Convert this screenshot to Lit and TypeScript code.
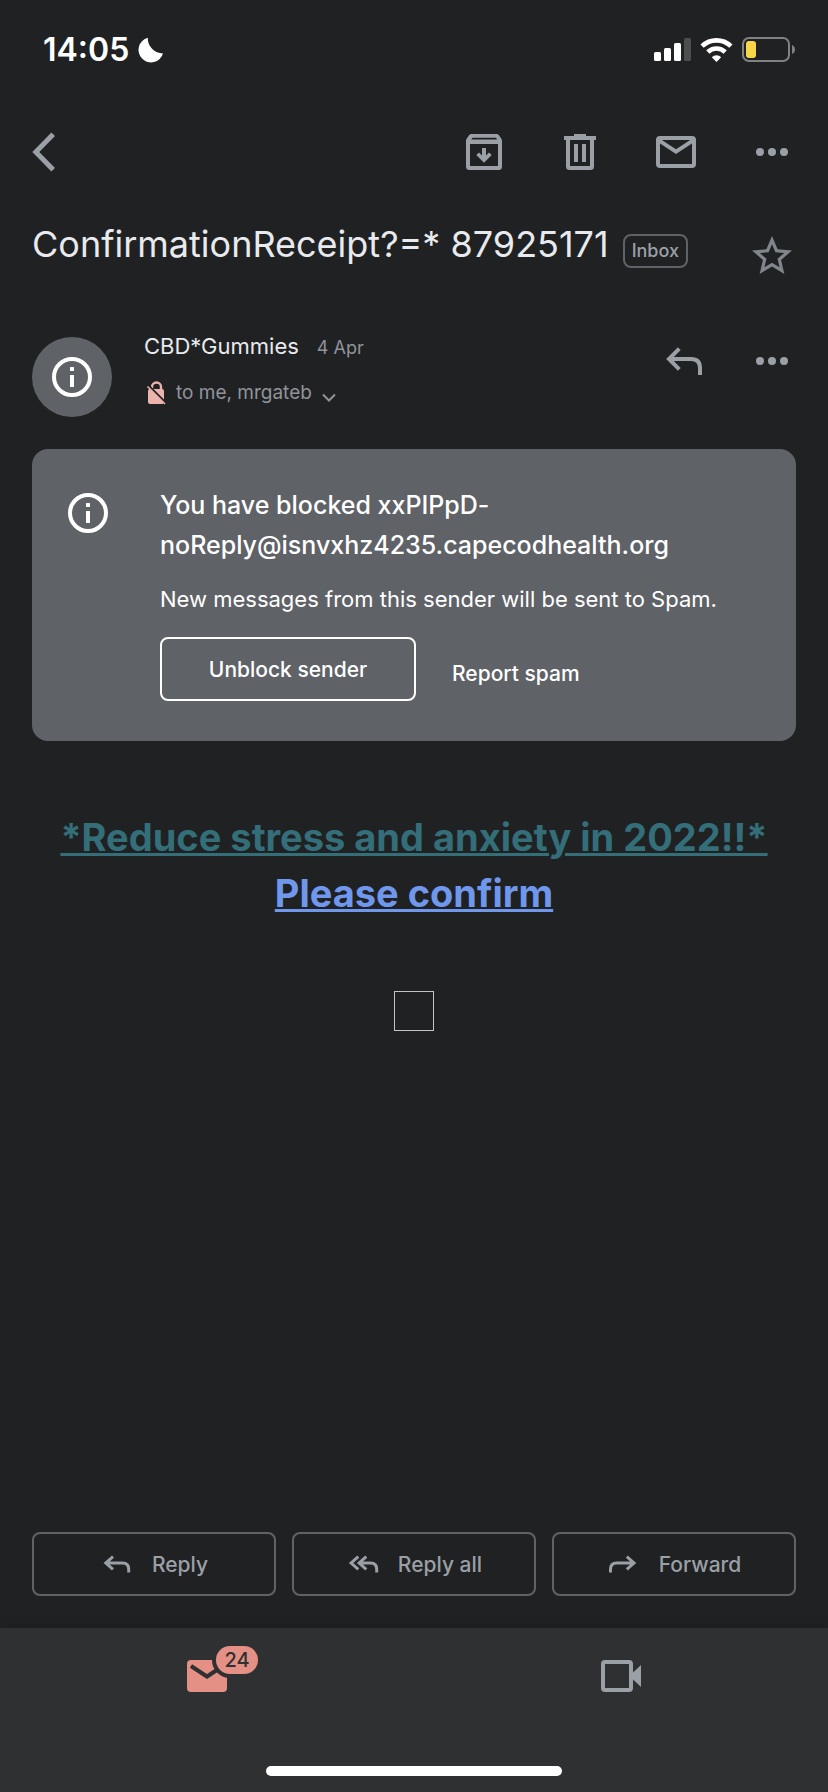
import { LitElement, html, css, svg } from "lit";
import { customElement, property } from "lit/decorators.js";

const shapes = {
  back: svg`<path d="M33.2 6.300 15.800 24l17.400 17.700" fill="none" stroke="currentColor" stroke-width="5"/>`,
  archive: svg`<path fill="currentColor" fill-rule="evenodd" d="M11.5 6h25a3 3 0 0 1 2.3 1.1L41.2 10.5a3.5 3.5 0 0 1 .8 2.2V38.5a3.5 3.5 0 0 1-3.5 3.5h-29A3.5 3.5 0 0 1 6 38.5V12.7a3.5 3.5 0 0 1 .8-2.2L9.2 7.1A3 3 0 0 1 11.5 6zM11.3 11.5h25.900L36 9.700H12.500zM10 16v22h28V16z"/><path fill="currentColor" d="M22 20h4v7.500l3-3 2.700 2.500-7.700 7.700-7.700-7.700 2.700-2.500 3 3z"/>`,
  trash: svg`<path fill="currentColor" fill-rule="evenodd" d="M18 6h12v2h10v4h-2v26.500a3.500 3.500 0 0 1-3.500 3.500h-21a3.500 3.500 0 0 1-3.500-3.500V12H8V8h10zM14 12v26h20V12zM18 16h4v18h-4zM26 16h4v18h-4z"/>`,
  mail: svg`<rect x="6" y="10" width="36" height="28" rx="2" fill="none" stroke="currentColor" stroke-width="4"/><path d="M6.500 12.200 24 23.700l17.500-11.500" fill="none" stroke="currentColor" stroke-width="4"/>`,
  more: svg`<g fill="currentColor"><circle cx="12" cy="24" r="4"/><circle cx="24" cy="24" r="4"/><circle cx="36" cy="24" r="4"/></g>`,
  star: svg`<path transform="scale(2)" fill="currentColor" d="M22 9.240l-7.190-.62L12 2 9.190 8.630 2 9.240l5.460 4.730L5.820 21 12 17.270 18.180 21l-1.630-7.030L22 9.240zM12 15.400l-3.760 2.270 1-4.280-3.320-2.880 4.380-.38L12 6.100l1.710 4.040 4.380.38-3.320 2.880 1 4.280L12 15.400z"/>`,
  info: svg`<circle cx="24" cy="24" r="18" fill="none" stroke="currentColor" stroke-width="4"/><path fill="currentColor" d="M22 14h4v4h-4zM22 22h4v12h-4z"/>`,
  reply: svg`<path d="M19.300 11.700 9 22l10.300 10.300M9 22h22q9 0 9 9v7" fill="none" stroke="currentColor" stroke-width="4"/>`,
  video: svg`<rect x="6" y="10" width="28" height="28" rx="2" fill="none" stroke="currentColor" stroke-width="4"/><path fill="currentColor" d="M35 21.500 44 13v22l-9-8.500z"/>`,
  mailFilled: svg`<path fill="currentColor" d="M8 8h32a4 4 0 0 1 4 4v24a4 4 0 0 1-4 4H8a4 4 0 0 1-4-4V12a4 4 0 0 1 4-4z"/><path d="M8 14l16 10.500L40 14" fill="none" stroke="#2f3032" stroke-width="4"/>`,
};
type ShapeName = keyof typeof shapes;

@customElement("mail-icon")
export class MailIcon extends LitElement {
  @property() name: ShapeName = "more";
  static styles = css`
    :host { display: block; width: 48px; height: 48px; flex: none; }
    svg { display: block; }
  `;
  render() {
    return html`<svg width="48" height="48" viewBox="0 0 48 48" aria-hidden="true">${shapes[this.name]}</svg>`;
  }
}

const smallArrows = {
  reply: svg`<path d="M13 8.600 5.800 15l7.200 6.400M5.800 15h16.700q6.200 0 6.200 6.200v3.200"/>`,
  replyAll: svg`<path d="M12.300 8.600 5.100 15l7.200 6.400M20.300 8.600 13.100 15l7.200 6.400M13.100 15h11.400q6.200 0 6.200 6.200v3.200"/>`,
  forward: svg`<path d="M19.800 8.600 27 15l-7.200 6.400M27 15H9.700q-6.200 0-6.200 6.200v3.200"/>`,
};

const actions: { label: string; arrow: keyof typeof smallArrows }[] = [
  { label: "Reply", arrow: "reply" },
  { label: "Reply all", arrow: "replyAll" },
  { label: "Forward", arrow: "forward" },
];

@customElement("status-bar")
export class StatusBar extends LitElement {
  static styles = css`
    :host { display: flex; align-items: center; justify-content: space-between; height: 100px; padding: 0 32px 0 43px; color: #fff; }
    div { display: flex; align-items: center; gap: 9px; }
    .time { font-size: 32px; line-height: 40px; font-weight: 600; }
    svg { display: block; overflow: visible; }
  `;
  render() {
    return html`
      <div>
        <span class="time">14:05</span>
        <svg width="26" height="26" viewBox="0 0 26 26" aria-label="Do not disturb"><path fill="currentColor" d="M9.800.8A15 15 0 0 0 25 16.400 12.500 12.500 0 1 1 9.800.8z"/></svg>
      </div>
      <div>
        <svg width="37" height="24" viewBox="0 0 37 24" aria-label="Signal"><g fill="currentColor"><rect y="14" width="7" height="9" rx="1.500"/><rect x="10" y="10" width="7" height="13" rx="1.500"/><rect x="20" y="5" width="7" height="18" rx="1.500"/><rect x="30" width="7" height="23" rx="1.500" fill="#4d4e50"/></g></svg>
        <svg width="33" height="24" viewBox="0 0 33 24" aria-label="Wi-Fi"><g fill="none" stroke="currentColor" stroke-width="4.600"><path d="M2.100 8.200a20.800 20.800 0 0 1 28.800 0"/><path d="M7.800 14a12.400 12.400 0 0 1 17.400 0"/></g><path fill="currentColor" d="M16.500 24l-4.700-4.700a6.600 6.600 0 0 1 9.400 0z"/></svg>
        <svg width="54" height="26" viewBox="0 0 54 26" aria-label="Battery low"><rect x="1" y="1" width="46" height="23" rx="6" fill="none" stroke="#808183" stroke-width="2"/><rect x="4" y="4" width="10" height="17" rx="3" fill="#f8d648"/><path fill="#808183" d="M50 8q3 1.500 3 4.500t-3 4.500z"/></svg>
      </div>
    `;
  }
}

@customElement("app-root")
export class AppRoot extends LitElement {
  static styles = css`
    :host {
      display: flex; flex-direction: column; min-height: 100vh; box-sizing: border-box;
      background: #202123; color: #e8eaed; font-family: Inter, "Liberation Sans", sans-serif;
    }
    * { box-sizing: border-box; }
    h1, h2, p { margin: 0; font-weight: 400; }
    button { background: none; border: 0; padding: 0; margin: 0; color: inherit; font: inherit; cursor: pointer; }
    svg { display: block; flex: none; }
    .grow { flex: 1; }

    .toolbar { display: flex; align-items: center; height: 104px; padding: 0 32px 0 20px; color: #9aa0a6; }
    .tools { display: flex; gap: 48px; margin-left: auto; }

    .subject { display: flex; align-items: flex-start; justify-content: space-between; gap: 16px; padding: 18px 32px 0; }
    .subject button { padding-top: 10px; color: #80868b; }
    .heading { display: flex; flex-wrap: wrap; align-items: baseline; gap: 14px; }
    h1 { font-size: 36px; line-height: 44px; }
    .label { border: 2px solid #5f6368; border-radius: 8px; padding: 0 7px; font-size: 18px; line-height: 30px; font-weight: 500; color: #9aa0a6; }

    .sender { display: flex; align-items: flex-start; padding: 57px 32px 32px; }
    .avatar { display: grid; place-items: center; width: 80px; height: 80px; border-radius: 50%; background: #5f6368; color: #fff; margin-right: 32px; flex: none; }
    .who { display: flex; flex-direction: column; gap: 24px; }
    .line { display: flex; align-items: center; line-height: 18px; font-size: 18px; color: #8f949a; }
    .line.top { align-items: baseline; gap: 18px; }
    .name { font-size: 22px; color: #e8eaed; }
    .recipients { display: flex; align-items: center; gap: 10px; line-height: 18px; font-size: 19px; }
    .message-tools { display: flex; gap: 40px; margin-left: auto; color: #9aa0a6; }

    .notice { display: flex; gap: 48px; align-items: flex-start; margin: 0 32px; padding: 36px 32px 40px; border-radius: 16px; background: #5f6267; color: #fff; }
    .notice mail-icon { margin-top: 4px; }
    .notice h2 { font-size: 25px; line-height: 40px; font-weight: 500; }
    .notice p { font-size: 22px; line-height: 28px; padding: 20px 0 24px; }
    .choices { display: flex; align-items: flex-end; gap: 36px; font-size: 21px; font-weight: 500; }
    .unblock { height: 64px; min-width: 256px; border: 2px solid #fff; border-radius: 8px; }
    .report { height: 56px; }

    .body { display: flex; flex-direction: column; align-items: center; padding: 68px 32px 0; text-align: center; }
    .body a { font-size: 38px; line-height: 56px; font-weight: 700; text-decoration-thickness: 3px; text-underline-offset: 2px; }
    .promo { color: #336e79; }
    .confirm { color: #6f97ec; }
    .picture { width: 40px; height: 40px; border: 1px solid #c4c4c4; margin-top: 70px; }

    .actions { display: grid; grid-template-columns: repeat(3, 1fr); gap: 16px; padding: 32px; }
    .actions button { display: flex; align-items: center; justify-content: center; gap: 20px; height: 64px; border: 2px solid #5f6368; border-radius: 8px; font-size: 21px; font-weight: 500; color: #9aa0a6; }
    .actions svg { fill: none; stroke: currentColor; stroke-width: 3; overflow: visible; }

    .bottom { display: flex; flex-direction: column; align-items: center; gap: 66px; padding: 24px 0 16px; background: #2f3032; box-shadow: 0 -2px 10px rgba(0, 0, 0, 0.1); }
    .tabs { display: grid; grid-template-columns: 1fr 1fr; justify-items: center; width: 100%; color: #9aa0a6; }
    .tab { position: relative; }
    .tab.active { color: #e59085; }
    .badge { position: absolute; left: 33px; top: -6px; min-width: 42px; border-radius: 14px; background: #e59085; color: #2f3032; box-shadow: 0 0 0 4px #2f3032; font-size: 20px; line-height: 28px; font-weight: 500; text-align: center; }
    .home { width: 296px; height: 10px; border-radius: 5px; background: #fff; }
  `;

  render() {
    return html`
      <status-bar></status-bar>
      <header class="toolbar">
        <button aria-label="Back"><mail-icon name="back"></mail-icon></button>
        <div class="tools">
          <button aria-label="Archive"><mail-icon name="archive"></mail-icon></button>
          <button aria-label="Delete"><mail-icon name="trash"></mail-icon></button>
          <button aria-label="Mark as unread"><mail-icon name="mail"></mail-icon></button>
          <button aria-label="More options"><mail-icon name="more"></mail-icon></button>
        </div>
      </header>

      <section class="subject">
        <div class="heading"><h1>ConfirmationReceipt?=* 87925171</h1><span class="label">Inbox</span></div>
        <button aria-label="Star"><mail-icon name="star"></mail-icon></button>
      </section>

      <section class="sender">
        <div class="avatar"><mail-icon name="info"></mail-icon></div>
        <div class="who">
          <div class="line top"><span class="name">CBD*Gummies</span><span>4 Apr</span></div>
          <div class="line">
            <svg width="32" height="24" viewBox="0 0 32 24" aria-label="Not encrypted">
              <path d="M8 8V6a4.500 4.500 0 0 1 9 0v3" fill="none" stroke="#ecb2ac" stroke-width="2.400"/>
              <path fill="#ecb2ac" d="M6 8h12a2 2 0 0 1 2 2v11a2 2 0 0 1-2 2H6a2 2 0 0 1-2-2V10a2 2 0 0 1 2-2z"/>
              <path d="M3.500 3.500 21.500 21.500" stroke="#202123" stroke-width="2.200"/>
              <path d="M3.500 5.500 21 23" stroke="#ecb2ac" stroke-width="1.600"/>
            </svg>
            <button class="recipients">to me, mrgateb
              <svg width="14" height="18" viewBox="0 0 14 18"><path d="M1 10.500l6 6 6-6" fill="none" stroke="currentColor" stroke-width="2"/></svg>
            </button>
          </div>
        </div>
        <div class="message-tools">
          <button aria-label="Reply to message"><mail-icon name="reply"></mail-icon></button>
          <button aria-label="More message options"><mail-icon name="more"></mail-icon></button>
        </div>
      </section>

      <section class="notice">
        <mail-icon name="info"></mail-icon>
        <div>
          <h2>You have blocked xxPIPpD-noReply@isnvxhz4235.capecodhealth.org</h2>
          <p>New messages from this sender will be sent to Spam.</p>
          <div class="choices">
            <button class="unblock">Unblock sender</button>
            <button class="report">Report spam</button>
          </div>
        </div>
      </section>

      <main class="body">
        <a class="promo" href="#promo">*Reduce stress and anxiety in 2022!!*</a>
        <a class="confirm" href="#confirm">Please confirm</a>
        <div class="picture"></div>
      </main>
      <div class="grow"></div>

      <div class="actions">
        ${actions.map(
          (a) => html`<button><svg width="32" height="32" viewBox="0 0 32 32" aria-hidden="true">${smallArrows[a.arrow]}</svg>${a.label}</button>`
        )}
      </div>

      <footer class="bottom">
        <nav class="tabs">
          <button class="tab active" aria-label="Mail, 24 unread"><mail-icon name="mailFilled"></mail-icon><span class="badge">24</span></button>
          <button class="tab" aria-label="Meet"><mail-icon name="video"></mail-icon></button>
        </nav>
        <div class="home"></div>
      </footer>
    `;
  }
}
